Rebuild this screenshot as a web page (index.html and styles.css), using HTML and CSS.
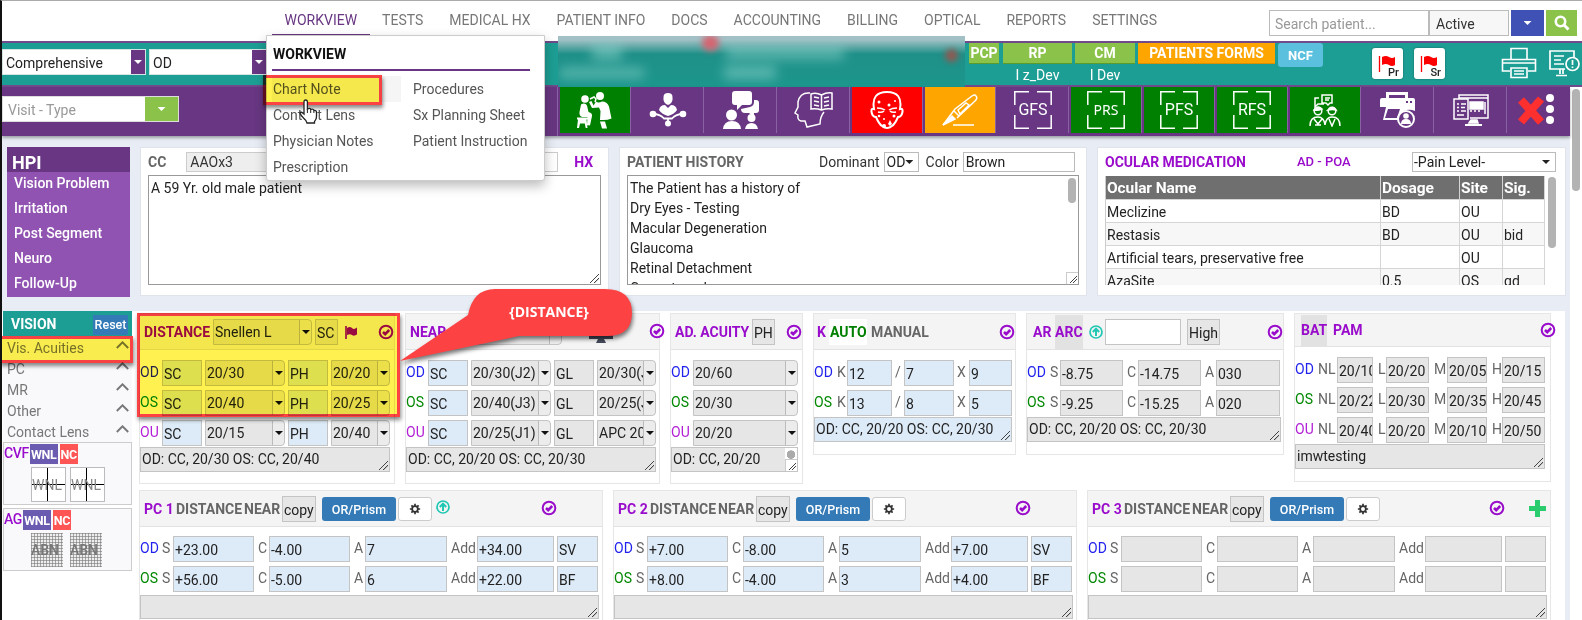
FILE: index.html
```html
<!DOCTYPE html>
<html lang="en">
<head>
<meta charset="utf-8">
<title>Workview</title>
<link rel="stylesheet" href="styles.css">
</head>
<body>
<svg class="defs" aria-hidden="true">
  <symbol id="check" viewBox="0 0 16 16"><circle cx="8" cy="8" r="6.3" fill="none" stroke="#9a0ccb" stroke-width="2"/><path d="M5 8l2.2 2.2L11.200 6" fill="none" stroke="#9a0ccb" stroke-width="2.6"/></symbol>
  <symbol id="up" viewBox="0 0 16 16"><circle cx="8" cy="8" r="6" fill="none" stroke="#20c8b4" stroke-width="1.7"/><path d="M8 12V5M4.800 8L8 4.700 11.200 8" fill="none" stroke="#20c8b4" stroke-width="2"/></symbol>
  <symbol id="gear" viewBox="0 0 14 14"><path d="M7 1v12M1 7h12M2.800 2.800l8.400 8.400M11.200 2.800l-8.400 8.400" stroke="#333" stroke-width="2"/><circle cx="7" cy="7" r="3.300" fill="#fff" stroke="#333" stroke-width="2"/></symbol>
  <symbol id="chev" viewBox="0 0 13 8"><path d="M.8 7L6.500 1.300 12.200 7" fill="none" stroke="#777" stroke-width="1.900"/></symbol>
  <symbol id="frame" viewBox="0 0 38 38"><path d="M.8 14V.8H15M23 .8h14.200V14M37.200 24v13.200H23M15 37.200H.8V24" fill="none" stroke="#fff" stroke-width="1.500"/></symbol>
  <symbol id="redflag" viewBox="0 0 18 18"><path d="M1.500 1v16" stroke="#f00" stroke-width="1.300"/><path d="M4 2q4-2 7 0t6 0v8q-3 2-6 0t-7 0z" fill="#f00"/></symbol>
</svg>
<div class="app">
  <header class="nav">
    <nav class="menu">
      <a class="on">WORKVIEW</a><a>TESTS</a><a>MEDICAL HX</a><a>PATIENT INFO</a><a>DOCS</a><a>ACCOUNTING</a><a>BILLING</a><a>OPTICAL</a><a>REPORTS</a><a>SETTINGS</a>
    </nav>
    <div class="search">
      <div class="query">Search patient...</div><div class="status">Active</div>
      <div class="btn-blue"><i class="tri white"></i></div>
      <div class="btn-find"><svg width="16" height="16" viewBox="0 0 16 16"><circle cx="6.500" cy="6.500" r="4.700" fill="none" stroke="#fff" stroke-width="2.600"/><path d="M10 10l4.500 4.500" stroke="#fff" stroke-width="3"/></svg></div>
    </div>
  </header>

  <section class="teal">
    <div class="picker exam"><span>Comprehensive</span><b><i class="tri white"></i></b></div>
    <div class="picker eye"><span>OD</span><b><i class="tri white"></i></b></div>
    <div class="redacted"><i class="smear s1"></i><i class="smear s2"></i><i class="smear s3"></i><i class="smear s4"></i><i class="spot p1"></i><i class="spot p2"></i></div>
    <div class="tag pcp">PCP</div>
    <div class="who"><div class="tag">RP</div><p>I z_Dev</p></div>
    <div class="who cm"><div class="tag">CM</div><p>I Dev</p></div>
    <div class="tag forms">PATIENTS FORMS</div>
    <div class="ncf">NCF</div>
    <div class="flag"><svg width="18" height="18"><use href="#redflag"/></svg><span>Pr</span></div>
    <div class="flag second"><svg width="18" height="18"><use href="#redflag"/></svg><span>Sr</span></div>
    <svg class="t-print" width="36" height="32" viewBox="0 0 36 32" fill="none" stroke="#fff" stroke-width="1.600"><path d="M10 12V1.500h16V12M9 24H1.500V12.500h33V24H27M2 16h32M10 21h16v9.500H10zM13 24h10M13 27h10"/></svg>
    <svg class="t-alert" width="31" height="27" viewBox="0 0 31 27" fill="none" stroke="#fff" stroke-width="1.700"><path d="M16 19H1V1h24v6M5 6h10M5 10h7M5 14h10M11 19v5M14 19v5M7 25.500h11"/><circle cx="23.500" cy="14" r="6.500"/><path d="M23.500 10v5M23.500 16.500v1.500"/></svg>
  </section>

  <section class="tools">
    <div class="visit"><span>Visit - Type</span><b><i class="tri white"></i></b></div>
    <div class="cells">
      <div class="cell green"><svg width="38" height="38" viewBox="0 0 38 38" fill="#fff"><circle cx="9" cy="8" r="3.800"/><circle cx="24" cy="5" r="4"/><path d="M5 13.500q4-2.500 6 1l1.500 6.500q4 1 3.500 4l-2 9.500-3-.5.5-8H6q-3-1-2.500-5zM1 26.500h11v2h-1.500l1 8.500H9.700l-.9-4.500H4L3 37H1l1-8.500H1zM20 10.500q2 2 6 0 5 0 7 5l2.500 12q-4 2-11.500 1.500l.5-9-1.500-3.500-7 .5-3-6 2.500-1 2 4.500z"/><path d="M24 30.500h5l2 7h-5z"/><path d="M14 8l4-2 2 2-1 3" fill="none" stroke="#fff" stroke-width="1.500"/></svg></div>
      <div class="cell"><svg width="38" height="36" viewBox="0 0 38 36" fill="#fff"><path d="M14.500 5q0-4 4.500-4t4.500 4v3q-1 4-4.500 5-3.500-1-4.500-5z"/><path d="M10 18q1-5 6-5l3 3 3-3q5 0 6 5-3 4.500-9 6-6-1.500-9-6z"/><path d="M19 31v-4M4 22q7 0 11 4.500h8q4-4.500 11-4.500" fill="none" stroke="#fff" stroke-width="1.800"/><circle cx="4" cy="22" r="3.300"/><circle cx="34" cy="22" r="3.300"/><circle cx="19" cy="31.500" r="3"/></svg></div>
      <div class="cell"><svg width="38" height="38" viewBox="0 0 38 38" fill="#fff"><rect x="10" width="20" height="14" rx="3"/><path d="M15 12v7l6-6z"/><path d="M32 9h2q3 0 3 3v7q0 3-3 3h-2v4l-5-4h-4q-4 0-4-4l9-2q4-1 4-5z"/><circle cx="9.500" cy="24" r="5.500"/><path d="M1 38q1-8 9-8t9 8zM23 38q1-6 6.500-6t6.500 6z"/><circle cx="29.500" cy="27" r="4"/></svg></div>
      <div class="cell"><svg width="40" height="38" viewBox="0 0 40 38" fill="none" stroke="#fff" stroke-width="1.500"><path d="M16 2Q6 1 4 11v5l-3 6 3 2q-1 5 3 6h4l2 6 13-3q0-7 4-12M17 3q5-2 10.500 1Q33 1 38 2v16q-5-1-10.500 1-5-2-10.500-1zM27.500 4v15M20 6l5 1M20 10l5 1M20 14l5 1M30 7l5-1M30 11l5-1M30 15l5-1"/></svg></div>
      <div class="cell red"><svg width="36" height="40" viewBox="0 0 36 40" fill="none" stroke="#fff" stroke-width="2"><path d="M5 19Q2 2 18 2t13 17q3-1 2.500 3-1 5-4.500 5-3 7-6 9-5 4-10 0-3-2-6-9-3.500 0-4.500-5Q2 18 5 19z"/><path d="M8 18q5 0 8 2M28 18q-5 0-8 2M9 22q4 1 6-1M27 22q-4 1-6-1" stroke-width="1.500"/><g fill="#fff" stroke="none"><circle cx="10" cy="12" r="1.500"/><circle cx="20" cy="15" r="1.500"/><circle cx="26" cy="11" r="1"/><circle cx="10" cy="26" r="1.300"/><circle cx="25" cy="26" r="1.500"/><circle cx="15" cy="29" r="1"/><circle cx="15" cy="36" r="2"/><path d="M21 30l2 4-2 2-2-2z"/></g></svg></div>
      <div class="cell orange"><svg width="36" height="34" viewBox="0 0 36 34" fill="none" stroke="#fff" stroke-width="1.500"><path d="M1 32L13 16 30 3q3-2 4 0 2 2-1 5L15 25M12 18l5 5M16 17l8-7 3 2-9 9zM11 32h21"/><path d="M1 32l9-9 3 3z" fill="#fff"/></svg></div>
      <div class="cell"><svg width="38" height="38"><use href="#frame"/></svg><em>GFS</em></div>
      <div class="cell green prs"><svg width="38" height="38"><use href="#frame"/></svg><em>PRS</em></div>
      <div class="cell green"><svg width="38" height="38"><use href="#frame"/></svg><em>PFS</em></div>
      <div class="cell green"><svg width="38" height="38"><use href="#frame"/></svg><em>RFS</em></div>
      <div class="cell green"><svg width="32" height="34" viewBox="0 0 32 34" fill="none" stroke="#fff" stroke-width="1.500"><path d="M13 2h10v8h-2l-2 2-2-2h-4zM10 5H6v9l3-3h6M16 5h5M16 7h4"/><circle cx="9" cy="18" r="3.800"/><circle cx="23" cy="18" r="3.800"/><path d="M1 33q0-9 8-9 6 0 7 8 1-8 7-8 8 0 8 9M5 26l4 5 4-5M20 26l3 7 3-7M6 32h6"/><path d="M5 17q4 1 8-1-4-4-8 1zM19 17q5-1 8 0-3-5-8 0z" fill="#fff"/></svg></div>
      <div class="cell"><svg width="36" height="36" viewBox="0 0 36 36"><path d="M6 0h22v6h5q2 0 2 2v11q-9-4-16 4v5H3l3-13H0V8q0-2 2-2h4zM9 3v3h16V3zM8 17L5 26h12l3-9z" fill="#fff" fill-rule="evenodd"/><circle cx="26" cy="27" r="8" fill="#683682" stroke="#fff" stroke-width="2"/><circle cx="26" cy="24" r="2.800" fill="#fff"/><path d="M21 32q0-5 5-5t5 5z" fill="#fff"/><path d="M26 10h2M30 10h2" stroke="#683682" stroke-width="2"/></svg></div>
      <div class="cell"><svg width="36" height="32" viewBox="0 0 36 32" fill="none" stroke="#fff" stroke-width="1.500"><path d="M6 5V1h29v23H17M1 5h14v20H1z"/><path d="M17 8h13v7H17z" fill="#fff"/><path d="M6 4h29M17 17h2M21 17h2M25 17h2M32 8v12"/><path d="M16 29l2-3h6l1 3z" fill="#fff"/><path d="M12 31h17" stroke-width="2"/><path d="M4 10h2M8 10h5M4 13.500h2M8 13.500h4M4 17h2M8 17h5M4 21h7"/></svg></div>
      <div class="cell last"><svg width="40" height="32" viewBox="0 0 40 32"><path d="M4 6l20 22M24 5L4 28" stroke="#fd2f2f" stroke-width="8"/><g fill="#fff"><circle cx="33" cy="4" r="4"/><circle cx="33" cy="15" r="4"/><circle cx="33" cy="26" r="4"/></g></svg></div>
    </div>
  </section>

  <main class="main">
    <section class="top">
      <aside class="hpi"><h2>HPI</h2><a>Vision Problem</a><a>Irritation</a><a>Post Segment</a><a>Neuro</a><a>Follow-Up</a></aside>
      <div class="panel cc">
        <div class="p-head"><h3>CC</h3><div class="orient">AAOx3</div><h3 class="hx">HX</h3></div>
        <div class="area">A 59 Yr. old male patient<i class="grip"></i></div>
      </div>
      <div class="panel hist">
        <div class="p-head"><h3>PATIENT HISTORY</h3><span>Dominant</span><div class="box dom">OD<i class="tri"></i></div><span>Color</span><div class="box color">Brown</div></div>
        <div class="area"><p>The Patient has a history of</p><p>Dry Eyes - Testing</p><p>Macular Degeneration</p><p>Glaucoma</p><p>Retinal Detachment</p><p>Current meds</p><i class="thumb"></i><i class="grip boxed"></i></div>
      </div>
      <div class="panel meds">
        <div class="p-head"><h3>OCULAR MEDICATION</h3><span>AD - POA</span><div class="box pain">-Pain Level-<i class="tri"></i></div></div>
        <div class="med-wrap">
          <div class="table">
            <div class="th">Ocular Name</div><div class="th">Dosage</div><div class="th">Site</div><div class="th">Sig.</div>
            <div>Meclizine</div><div>BD</div><div>OU</div><div></div>
            <div class="alt">Restasis</div><div class="alt">BD</div><div class="alt">OU</div><div class="alt">bid</div>
            <div>Artificial tears, preservative free</div><div></div><div>OU</div><div></div>
            <div class="alt">AzaSite</div><div class="alt">0.5</div><div class="alt">OS</div><div class="alt">qd</div>
          </div>
          <i class="bar"></i>
        </div>
      </div>
    </section>

    <section class="vision">
      <aside class="side">
        <div class="v-head"><b>VISION</b><span>Reset</span></div>
        <div class="v-list">
          <div>Vis. Acuities<svg width="13" height="8"><use href="#chev"/></svg></div>
          <div>PC<svg width="13" height="8"><use href="#chev"/></svg></div>
          <div>MR<svg width="13" height="8"><use href="#chev"/></svg></div>
          <div>Other<svg width="13" height="8"><use href="#chev"/></svg></div>
          <div>Contact Lens<svg width="13" height="8"><use href="#chev"/></svg></div>
        </div>
        <div class="test"><div class="t-head">CVF<b>WNL</b><b class="nc">NC</b></div><div class="imgs"><span class="cross">WNL</span><span class="cross">WNL</span></div></div>
        <div class="test ag"><div class="t-head">AG<b>WNL</b><b class="nc">NC</b></div><div class="imgs"><span class="mesh">ABN</span><span class="mesh">ABN</span></div></div>
      </aside>

      <div class="cards">
        <div class="line one">
          <article class="card dist">
            <div class="head"><h4>DISTANCE</h4><div class="sel"><span>Snellen L</span></div><div class="g">SC</div><svg width="12" height="13" viewBox="0 0 12 13"><path d="M1 0v13" stroke="#9a0ccb" stroke-width="1.700"/><path d="M2 2q3-2 5 0t5-.5v7q-3 2-5 .5t-5 0z" fill="#9a0ccb"/></svg><svg class="ck" width="16" height="16"><use href="#check"/></svg></div>
            <div class="row"><i class="od">OD</i><div class="f">SC</div><div class="sel"><span>20/30</span></div><div class="f">PH</div><div class="sel"><span>20/20</span></div></div>
            <div class="row"><i class="os">OS</i><div class="f">SC</div><div class="sel"><span>20/40</span></div><div class="f">PH</div><div class="sel"><span>20/25</span></div></div>
            <div class="row"><i class="ou">OU</i><div class="f">SC</div><div class="sel"><span>20/15</span></div><div class="f">PH</div><div class="sel"><span>20/40</span></div></div>
            <div class="note">OD: CC, 20/30 OS: CC, 20/40<i class="grip"></i></div>
          </article>
          <article class="card near">
            <div class="head"><h4>NEAR</h4><div class="sel"><span>Snellen</span></div><svg width="24" height="24" viewBox="0 0 24 24" fill="#444a5a"><path d="M0 0h24v19H0z"/><path d="M9 19h6l2 4H7z"/></svg><svg class="ck" width="16" height="16"><use href="#check"/></svg></div>
            <div class="row"><i class="od">OD</i><div class="f">SC</div><div class="sel"><span>20/30(J2)</span></div><div class="g">GL</div><div class="sel"><span>20/30(J2)</span></div></div>
            <div class="row"><i class="os">OS</i><div class="f">SC</div><div class="sel"><span>20/40(J3)</span></div><div class="g">GL</div><div class="sel"><span>20/25(J1)</span></div></div>
            <div class="row"><i class="ou">OU</i><div class="f">SC</div><div class="sel"><span>20/25(J1)</span></div><div class="g">GL</div><div class="sel"><span>APC 20/20</span></div></div>
            <div class="note">OD: CC, 20/20 OS: CC, 20/30<i class="grip"></i></div>
          </article>
          <article class="card acu">
            <div class="head"><h4>AD. ACUITY</h4><div class="g">PH</div><svg class="ck" width="16" height="16"><use href="#check"/></svg></div>
            <div class="row"><i class="od">OD</i><div class="sel"><span>20/60</span></div></div>
            <div class="row"><i class="os">OS</i><div class="sel"><span>20/30</span></div></div>
            <div class="row"><i class="ou">OU</i><div class="sel"><span>20/20</span></div></div>
            <div class="note">OD: CC, 20/20<i class="mini"></i><i class="grip boxed"></i></div>
          </article>
          <article class="card kk">
            <div class="head"><h4>K</h4><h4 class="auto">AUTO</h4><h4 class="grey">MANUAL</h4><svg class="ck" width="16" height="16"><use href="#check"/></svg></div>
            <div class="row"><i class="od">OD</i><i>K</i><div class="f">12</div><i>/</i><div class="f">7</div><i>X</i><div class="f">9</div></div>
            <div class="row"><i class="os">OS</i><i>K</i><div class="f">13</div><i>/</i><div class="f">8</div><i>X</i><div class="f">5</div></div>
            <div class="note blue">OD: CC, 20/20 OS: CC, 20/30<i class="grip"></i></div>
          </article>
          <article class="card ar">
            <div class="head"><h4>AR</h4><h4 class="chip">ARC</h4><svg width="16" height="16"><use href="#up"/></svg><div class="g blank"></div><div class="g">High</div><svg class="ck" width="16" height="16"><use href="#check"/></svg></div>
            <div class="row"><i class="od">OD</i><i>S</i><div class="g">-8.75</div><i>C</i><div class="g">-14.75</div><i>A</i><div class="g">030</div></div>
            <div class="row"><i class="os">OS</i><i>S</i><div class="g">-9.25</div><i>C</i><div class="g">-15.25</div><i>A</i><div class="g">020</div></div>
            <div class="note">OD: CC, 20/20 OS: CC, 20/30<i class="grip"></i></div>
          </article>
          <article class="card bat">
            <div class="head"><h4 class="chip">BAT</h4><h4>PAM</h4><svg class="ck" width="16" height="16"><use href="#check"/></svg></div>
            <div class="row"><i class="od">OD</i><i>NL</i><div class="g">20/10</div><i>L</i><div class="g">20/20</div><i>M</i><div class="g">20/05</div><i>H</i><div class="g">20/15</div></div>
            <div class="row"><i class="os">OS</i><i>NL</i><div class="g">20/22</div><i>L</i><div class="g">20/30</div><i>M</i><div class="g">20/35</div><i>H</i><div class="g">20/45</div></div>
            <div class="row"><i class="ou">OU</i><i>NL</i><div class="g">20/40</div><i>L</i><div class="g">20/20</div><i>M</i><div class="g">20/10</div><i>H</i><div class="g">20/50</div></div>
            <div class="note">imwtesting<i class="grip"></i></div>
          </article>
        </div>
        <div class="line two">
          <article class="card pc">
            <div class="head"><h4>PC 1</h4><h4 class="grey">DISTANCE</h4><h4 class="grey">NEAR</h4><div class="g">copy</div><div class="prism">OR/Prism</div><div class="cog"><svg width="12" height="12"><use href="#gear"/></svg></div><svg class="upi" width="16" height="16"><use href="#up"/></svg><svg width="16" height="16"><use href="#check"/></svg></div>
            <div class="row"><i class="od">OD</i><i>S</i><div class="f">+23.00</div><i>C</i><div class="f">-4.00</div><i>A</i><div class="f">7</div><i>Add</i><div class="f">+34.00</div><div class="f">SV</div></div>
            <div class="row"><i class="os">OS</i><i>S</i><div class="f">+56.00</div><i>C</i><div class="f">-5.00</div><i>A</i><div class="f">6</div><i>Add</i><div class="f">+22.00</div><div class="f">BF</div></div>
            <div class="note"><i class="grip"></i></div>
          </article>
          <article class="card pc">
            <div class="head"><h4>PC 2</h4><h4 class="grey">DISTANCE</h4><h4 class="grey">NEAR</h4><div class="g">copy</div><div class="prism">OR/Prism</div><div class="cog"><svg width="12" height="12"><use href="#gear"/></svg></div><i></i><svg width="16" height="16"><use href="#check"/></svg></div>
            <div class="row"><i class="od">OD</i><i>S</i><div class="f">+7.00</div><i>C</i><div class="f">-8.00</div><i>A</i><div class="f">5</div><i>Add</i><div class="f">+7.00</div><div class="f">SV</div></div>
            <div class="row"><i class="os">OS</i><i>S</i><div class="f">+8.00</div><i>C</i><div class="f">-4.00</div><i>A</i><div class="f">3</div><i>Add</i><div class="f">+4.00</div><div class="f">BF</div></div>
            <div class="note"><i class="grip"></i></div>
          </article>
          <article class="card pc">
            <div class="head"><h4>PC 3</h4><h4 class="grey">DISTANCE</h4><h4 class="grey">NEAR</h4><div class="g">copy</div><div class="prism">OR/Prism</div><div class="cog"><svg width="12" height="12"><use href="#gear"/></svg></div><i></i><svg width="16" height="16"><use href="#check"/></svg><svg class="plus" width="17" height="17" viewBox="0 0 17 17"><path d="M8.500 0v17M0 8.500h17" stroke="#2bcc6e" stroke-width="5"/></svg></div>
            <div class="row"><i class="od">OD</i><i>S</i><div class="g"></div><i>C</i><div class="g"></div><i>A</i><div class="g"></div><i>Add</i><div class="g"></div><div class="g"></div></div>
            <div class="row"><i class="os">OS</i><i>S</i><div class="g"></div><i>C</i><div class="g"></div><i>A</i><div class="g"></div><i>Add</i><div class="g"></div><div class="g"></div></div>
            <div class="note"><i class="grip"></i></div>
          </article>
        </div>
      </div>
    </section>
  </main>
  <div class="scroll"></div>

  <div class="dropdown">
    <h3>WORKVIEW</h3>
    <div class="cols">
      <ul><li class="hover">Chart Note</li><li>Contact Lens</li><li>Physician Notes</li><li>Prescription</li></ul>
      <ul><li>Procedures</li><li>Sx Planning Sheet</li><li>Patient Instruction</li></ul>
    </div>
  </div>
  <div class="mark m-note"><i></i></div>
  <div class="mark m-vis"><i></i></div>
  <div class="mark m-dist"><i></i></div>
  <svg class="cursor" width="19" height="25" viewBox="0 0 19 25"><path d="M5 14V3q0-2 1.700-2T8.400 3v7q3-1.500 3.300.5 2.600-1 3.200 1 2.600-.5 2.600 2v4q0 3-2 5v1.500H8q-1-3-3.500-5-3-3-3.500-5 1-2 4 1z" fill="#fff" stroke="#222" stroke-width="1.300"/><path d="M8.400 10v4M11.700 11v3M14.900 12v2" stroke="#222"/></svg>
  <div class="callout">
    <svg width="250" height="90" viewBox="0 0 250 90"><path d="M3 74L71 28Q76 2 98 2H208Q235 2 235 26T208 49H122Z" fill="#fd4244"/></svg>
    <span>{DISTANCE}</span>
  </div>
</div>
</body>
</html>
```
FILE: styles.css
```css
*{box-sizing:border-box;margin:0;padding:0}
body{width:1582px;height:620px;overflow:hidden;background:#fff;font:14px/18px Roboto,"Noto Sans",sans-serif;color:#333}
i,em{font-style:normal}
svg{display:block;flex:none}
.defs{position:absolute;width:0;height:0}
.app{position:relative;width:1582px;height:620px;overflow:hidden;border-left:2px solid #111;border-top:1px solid #aaa}
.tri{display:block;width:8px;height:4px;background:#222;clip-path:polygon(0 0,100% 0,50% 100%)}
.tri.white{background:#fff}

.nav{height:40px;display:flex;justify-content:space-between;padding-left:270px}
.menu{display:flex;height:35px}
.menu a{padding:10px 13px 0;color:#777;white-space:nowrap}
.menu a:first-child{margin-right:-1px;padding-left:12.500px}
.menu .on{color:#683682;border-bottom:2px solid #683682}
.search{display:flex;margin:9px 5px 0 0;height:26px;line-height:26px}
.query{width:160px;border:1px solid #bbb;padding-left:5px;color:#999}
.status{width:80px;border:1px solid #bbb;background:#f7f7f7;padding-left:6px;margin-right:2px}
.btn-blue,.btn-find{display:grid;place-items:center;background:#3f51b5;width:33px}
.btn-find{background:#8bc34a;width:31px;margin-left:2px}

.teal{height:46px;border-top:2px solid #704a8a;border-bottom:2px solid #704a8a;background:#1d9e94;display:flex;align-items:flex-start}
.picker{display:flex;height:26px;margin-top:6px;background:#fff;border:1px solid #d5e5e4;line-height:26px;color:#222}
.picker span{flex:1;padding-left:3px}
.picker b{width:14px;background:#683682;display:grid;place-items:center}
.exam{width:144px;margin-right:3px}
.eye{width:118px;margin-right:291px}
.redacted{position:relative;overflow:hidden;width:407px;height:51px;margin-top:-7px;background:linear-gradient(#a5c0c8 0,#9fc0c4 4px,#1f9088 18px,#1c968c)}
.smear{position:absolute;background:#8fd6cf;filter:blur(6px);opacity:.55}
.s1{left:34px;top:8px;width:30px;height:16px}.s2{left:2px;top:32px;width:84px;height:10px}.s3{left:168px;top:10px;width:118px;height:13px}.s4{left:166px;top:30px;width:52px;height:13px}
.spot{position:absolute;width:17px;height:16px;border-radius:50%;background:#d56470;filter:blur(3px)}
.p1{left:144px;top:-1px}.p2{left:387px;top:13px;background:#95564f;width:13px;height:13px}
.tag{height:21px;line-height:21px;background:#8bc34a;color:#fff;font-weight:700;text-align:center;border-bottom:1px solid #5b9a2c}
.pcp{width:30px;margin:0 4px}
.who{width:69px;margin-right:3px;text-align:center;color:#fff}
.who p{margin-top:2px;line-height:18px}
.cm{width:60px}
.forms{width:137px;background:#ffa500;border-color:#d89000}
.ncf{width:45px;height:24px;line-height:25px;margin:0 49px 0 3px;background:#5bc0de;border-radius:3px;color:#fff;font-weight:700;font-size:13px;text-align:center}
.flag{position:relative;width:31px;height:31px;margin:5px 11px 0 0;background:#fff;border-radius:3px;padding:7px 0 0 6px;box-shadow:0 0 2px #0006}
.flag span{position:absolute;right:4px;bottom:-1px;font-size:11px;font-weight:500;line-height:15px;color:#222}
.second{margin-right:56px}
.t-print{margin-top:4px;margin-right:12px}
.t-alert{margin-top:7px}

.tools{position:relative;z-index:1;width:1568px;height:49px;background:#683682;box-shadow:0 2px 3px #0005;display:flex;justify-content:space-between}
.visit{display:flex;width:177px;height:26px;margin-top:9px;border:1px solid #ddd;background:#fff;color:#999;line-height:27px}
.visit span{flex:1;padding-left:5px}
.visit b{width:33px;background:#8bc34a;display:grid;place-items:center}
.cells{display:flex;border-left:1px solid #8a62a3;padding-left:2px}
.cell{position:relative;width:70px;height:46px;margin-right:3px;display:grid;place-items:center;box-shadow:1px 0 #8a62a3}
.cell svg{grid-area:1/1}
.cell em{grid-area:1/1;color:#fff;font:16px/20px Roboto,sans-serif}
.cell.prs em{font:14px/20px "Noto Sans",sans-serif}
.last{width:61px;margin-right:0;box-shadow:none;padding-right:6px}
.green{background:#008000}.red{background:#f00}.orange{background:#ffa500}

.main{width:1568px;background:#e8edf5;padding-top:11px}
.top{display:flex;gap:10px;height:164px;padding-left:5px}
.hpi{width:123px;height:150px;background:#9153b1;color:#fff;font-weight:500}
.hpi h2{height:25px;background:#683682;font:700 18px/31px Roboto,sans-serif;padding-left:5px}
.hpi a{display:block;height:25px;line-height:23px;padding-left:7px}
.panel{width:469px;height:149px;background:#fff;border:1px solid #e0e4ea;padding:4px 7px}
.panel.hist{width:468px}
.panel.cc{padding-right:8px}
.p-head{display:flex;align-items:center;height:20px;margin-bottom:3px}
.p-head h3{font:700 14px/18px Roboto,sans-serif;color:#666}
.p-head .hx,.meds h3,.meds .p-head span{color:#9a0ccb}
.meds .p-head h3{color:#9a0ccb}
.orient{width:372px;margin-left:20px;height:20px;background:linear-gradient(90deg,#eee 200px,#fff 300px);border:1px solid #ccc;padding-left:3px}
.hx{margin-left:16px}
.box{border:1px solid #bbb;height:20px;background:#fff;display:flex;align-items:center;padding-left:2px;color:#222}
.hist .p-head h3{width:192px}
.dom{width:35px;margin:0 7px 0 4px}
.color{width:112px;margin-left:4px}
.area{position:relative;height:110px;border:1px solid #999;padding:2px 2px;line-height:20px;overflow:hidden;color:#222}
.cc .area{width:453px}
.grip{position:absolute;right:1px;bottom:1px;width:9px;height:9px;background:linear-gradient(135deg,#0000 46%,#444 47% 53%,#0000 54% 70%,#444 71% 77%,#0000 78%)}
.grip.boxed{right:0;bottom:0;width:12px;height:12px;border:1px solid #ccc;border-width:1px 0 0 1px;background:linear-gradient(135deg,#0000 46%,#444 47% 53%,#0000 54% 70%,#444 71% 77%,#0000 78%) 3px 3px/7px 7px no-repeat}
.thumb{position:absolute;right:2px;top:2px;width:8px;height:25px;border-radius:4px;background:#b3b3b3}
.meds .p-head span{margin-left:51px;font-size:13px;font-weight:500}
.box.pain{width:144px;margin-left:auto;justify-content:space-between;padding-right:5px;margin-right:2px;padding-left:1px}
.med-wrap{display:flex;gap:3px;height:110px;overflow:hidden;padding-top:1px}
.table{display:grid;grid-template-columns:275px 79px 43px 42px;grid-template-rows:24px;grid-auto-rows:23px;border-left:1px solid #ccc}
.table div{border-right:1px solid #d5d5d5;border-bottom:1px solid #d5d5d5;padding:3px 0 0 1px;white-space:nowrap;color:#222;height:23px}
.table .th{background:#6f6f6f;color:#fff;font-weight:700;font-size:15.500px;letter-spacing:-.1px;height:24px}
.table .alt{background:#f7f7f7}
.bar{width:8px;height:71px;border-radius:4px;background:#b3b3b3;margin-top:1px}

.vision{display:flex;gap:7px;width:1563px;height:309px;background:#fff;padding-left:1px}
.side{width:129px}
.v-head{display:flex;height:25px;background:#1d9e94;color:#fff;padding:4px 4px 0 8px;justify-content:space-between}
.v-head b{line-height:18px}
.v-head span{background:#337ab7;height:20px;width:35px;font:500 12.500px/20px Roboto,sans-serif;text-align:center}
.v-list{background:#f9f9fc;height:106px;color:#777}
.v-list div{display:flex;justify-content:space-between;height:21px;line-height:24px;padding:0 3px 0 4px}
.v-list svg{margin-top:5px}
.test{height:63px;border:1px solid #ccc;background:#f9f9fc;margin-bottom:3px}
.t-head{display:flex;gap:2px;color:#9a0ccb;font-weight:500;line-height:20px;letter-spacing:-.4px}
.t-head b{background:#6a5ab0;color:#fff;height:20px;width:28px;margin-top:1px;font:700 12.500px/21px Roboto,sans-serif;text-align:center}
.t-head b:nth-child(1){margin-left:-1px}
.t-head .nc{width:18px;background:#f55}
.imgs{display:flex;gap:4px;padding:3px 0 0 27px}
.imgs span{width:35px;height:35px;font-size:14px;line-height:35px;color:#888}
.cross{border:1px solid #bbb;background:linear-gradient(#000,#000) 15px 0/1px 100% no-repeat,linear-gradient(#000,#000) 0 16px/100% 1px no-repeat,#fff}
.imgs .mesh{width:32px;margin-right:3px;height:34px;font-weight:500;color:#777;background:repeating-linear-gradient(90deg,#7779 0 1px,#0000 1px 3px),repeating-linear-gradient(#7779 0 1px,#0000 1px 3px),#eee}

.cards{padding-top:2px;flex:1}
.line{display:flex;align-items:flex-start;height:177px}
.card{position:relative;flex:none;border:1px solid #e6e6e6;height:171px;margin-right:10px;background:#fff;color:#222}
.head{height:36px;display:grid;align-items:center;background:#f4f4f4;border-bottom:1px solid #e2e2e2;margin-bottom:10px;padding-top:1px}
.head h4{font:700 14px/26px Roboto,sans-serif;color:#9a0ccb;white-space:nowrap}
.head .grey{color:#666}
.head .auto{color:#008000;background:#fff;padding-left:1px}
.head .chip{background:#e2e2e2;height:34px;line-height:34px}
.row{display:grid;height:26px;margin-bottom:4px;line-height:26px;column-gap:3px}
.row i{line-height:25px;color:#666;white-space:nowrap}
.row .od{color:#22e}.row .os{color:#080}.row .ou{color:#b21fd6}
.f,.g,.sel{height:26px;border:1px solid #c4c4c4;background:#ddebf9;padding-left:1px;line-height:27px;overflow:hidden;white-space:nowrap;color:#222}
.g,.sel{background-color:#e6e6e6}
.head .blank{background:#fff}
.sel{display:flex;align-items:center;border-radius:0 4px 4px 0;background:linear-gradient(#ececec,#ececec) right/11px 100% no-repeat,linear-gradient(#bbb,#bbb) right/12px 100% no-repeat,#e6e6e6;justify-content:space-between}
.sel span{overflow:hidden;flex:1}
.sel::after{content:"";width:8px;height:4px;margin:0 1px 0 3px;background:#111;clip-path:polygon(0 0,100% 0,50% 100%)}
.note{position:relative;height:25px;margin-top:-2px;border:1px solid #c4c4c4;background:#e6e6e6;padding-left:1px;line-height:23px;white-space:nowrap;overflow:hidden}
.note.blue{background:#ddebf9}
.mini{position:absolute;right:0;top:0;width:12px;height:12px;background:radial-gradient(circle at 50% 55%,#aaa 4px,#fff 4.500px)}
.acu .note .boxed{background-color:#fff}
.ck{justify-self:end}
.dist{width:256px}
.dist .head{grid-template-columns:66px 99px 23px 16px 1fr;column-gap:3px;padding-left:4px}
.dist .head svg:not(.ck){margin-left:4px}
.dist .row,.near .row{grid-template-columns:19px 40px 80px 40px 59px}
.dist .note,.near .note{width:250px}
.near{width:255px}
.near .head{grid-template-columns:52px 100px 24px 1fr;padding-left:4px}
.near .head svg:not(.ck){margin-left:27px}
.near .head .ck{margin:-2px -6px 0 0}
.acu{width:133px}
.acu .head{grid-template-columns:77px 23px 1fr;padding-left:4px}
.acu .row{grid-template-columns:19px 105px}
.acu .note{width:127px}
.kk,.ar{height:142px}
.kk{width:203px}
.kk .head{grid-template-columns:8px 38px 80px 1fr;column-gap:4px;padding-left:3px}
.kk .row{grid-template-columns:23px 10px 45px 12px 50px 15px 43px;column-gap:0}
.kk .row i:nth-child(4),.kk .row i:nth-child(6){padding-left:3px}
.kk .note{width:198px}
.ar{width:258px}
.ar .head{grid-template-columns:22px 28px 22px 76px 33px 1fr;padding-left:6px}
.ar .head svg:not(.ck){margin-left:5px}
.ar .head .g:nth-child(5){margin-left:6px;margin-right:-6px}
.ar .row{grid-template-columns:23px 10px 63px 15px 63px 15px 64px;column-gap:0}
.ar .row i:nth-child(4),.ar .row i:nth-child(6){padding-left:4px}
.ar .note{width:254px}
.bat{width:257px;height:169px;margin-right:0}
.bat .head{height:33px;grid-template-columns:26px 40px 1fr;column-gap:6px;padding:0 0 0 6px}
.bat .head .chip{height:31px;line-height:31px}
.bat .ck{margin-right:-6px}
.bat .row{grid-template-columns:23px 19px 36px 13px 43px 18px 40px 15px 43px;column-gap:0}
.bat .row i:nth-child(4),.bat .row i:nth-child(6),.bat .row i:nth-child(8){padding-left:5px}
.bat .note{width:250px}
.one .note{margin-top:-3px}
.pc{width:464px;height:140px}
.pc .head{height:36px;padding-top:0;margin-bottom:9px;grid-template-columns:32px 68px 38px 34px 6px 74px 2px 34px 95px 40px 1fr;padding-left:4px}
.pc .head>:nth-child(5){grid-column:6}.pc .head>:nth-child(6){grid-column:8}
.pc .head>:nth-child(7){grid-column:9}.pc .head>:nth-child(8){grid-column:10;margin:-2px 0 0 14px}
.pc .head .upi{margin:-4px 0 0 3px}
.pc .head .plus{grid-column:11;margin-left:14px}
.prism{height:24px;background:#337ab7;border-radius:3px;color:#fff;font:500 12.500px/25px Roboto,sans-serif;text-align:center}
.cog{height:24px;background:#fff;border:1px solid #ccc;border-radius:3px;display:grid;place-items:center}
.pc .row{grid-template-columns:22px 11px 81px 15px 81px 15px 82px 30px 77px 3px 41px;column-gap:0}
.pc .row>:last-child{grid-column:11}
.pc .row i:nth-child(4),.pc .row i:nth-child(6),.pc .row i:nth-child(8){padding-left:4px}
.pc .note{width:459px;height:24px;margin-top:-1px}
.scroll{position:absolute;left:1570px;top:88px;width:8px;height:102px;border-radius:4px;background:#b3b3b3}

.dropdown{position:absolute;z-index:3;left:264px;top:34px;width:279px;height:146px;background:#fff;border:1px solid #ccc;border-radius:0 0 3px 3px;box-shadow:0 5px 12px #0004;padding:0 14px 0 5px}
.dropdown h3{font:700 14px/37px Roboto,sans-serif;color:#111;height:35px;border-bottom:2px solid #683682;padding-left:1px}
.cols{display:flex;padding-top:5px}
.cols ul{width:140px;list-style:none;color:#555}
.cols li{height:26px;line-height:26px;padding-left:1px;white-space:nowrap}
.cols .hover{background:#f5f5f5;width:129px}
.mark{position:absolute;z-index:4;border:3px solid #fd4244;box-shadow:1px 3px 4px #0007,inset 1px 3px 4px #0005;mix-blend-mode:multiply}
.mark i{display:block;height:100%;background:#fff250}
.m-note{left:261px;top:74px;width:119px;height:30px}
.m-vis{left:-3px;top:335px;width:134px;height:27px}
.m-dist{left:135px;top:312px;width:263px;height:104px}
.cursor{position:absolute;z-index:5;left:297px;top:98px}
.callout{position:absolute;z-index:5;left:395px;top:286px;filter:drop-shadow(1px 3px 2px #0008)}
.callout span{position:absolute;left:74px;width:156px;top:15px;text-align:center;color:#fff;font:700 14px/20px "Open Sans",sans-serif}
.cols ul+ul{margin-left:-1px;padding-left:0;transform:none}
.cols ul:first-child{width:140px}
.cols ul:last-child li{padding-left:2px}
.cols{justify-content:flex-start}
.cols ul{flex:none}
```
